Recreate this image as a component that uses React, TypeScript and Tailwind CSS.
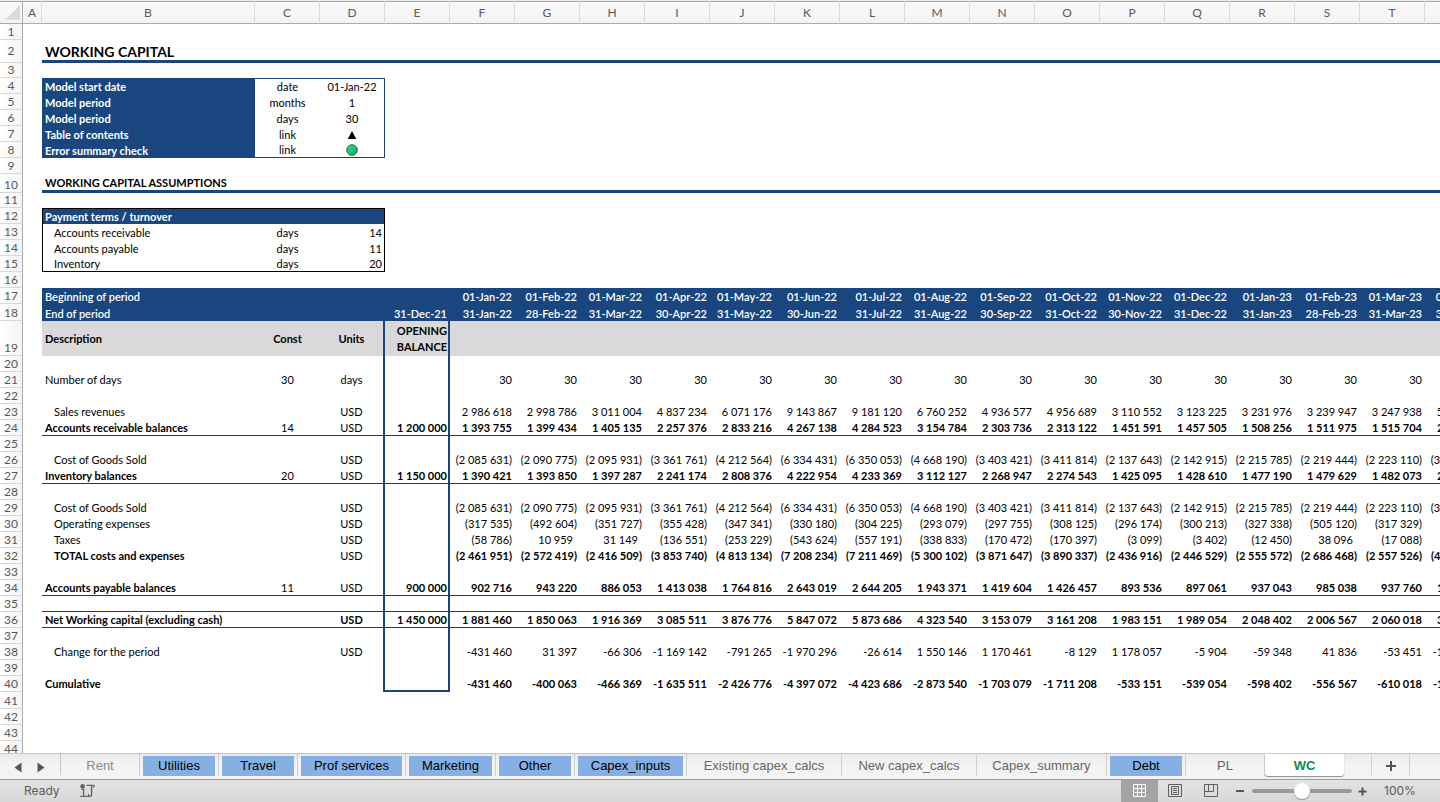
import { useState } from 'react';
import clsx from 'clsx';

interface SheetRow {
  n: number;
  height?: string;
  label?: string;
  constant?: React.ReactNode;
  unit?: React.ReactNode;
  opening?: React.ReactNode;
  values?: string[];
  all?: string; // classes shared by every cell from B on
  b?: string;
  c?: string;
  d?: string;
  e?: string;
  v?: string;
}

const COLUMNS = 'FGHIJKLMNOPQRSTU'.split('');

const list = (text: string) => text.split('|');

const starts = list('01-Jan-22|01-Feb-22|01-Mar-22|01-Apr-22|01-May-22|01-Jun-22|01-Jul-22|01-Aug-22|01-Sep-22|01-Oct-22|01-Nov-22|01-Dec-22|01-Jan-23|01-Feb-23|01-Mar-23|01-Apr-23');
const ends = list('31-Jan-22|28-Feb-22|31-Mar-22|30-Apr-22|31-May-22|30-Jun-22|31-Jul-22|31-Aug-22|30-Sep-22|31-Oct-22|30-Nov-22|31-Dec-22|31-Jan-23|28-Feb-23|31-Mar-23|30-Apr-23');
const sales = list('2 986 618|2 998 786|3 011 004|4 837 234|6 071 176|9 143 867|9 181 120|6 760 252|4 936 577|4 956 689|3 110 552|3 123 225|3 231 976|3 239 947|3 247 938|5 217 905');
const receivable = list('1 393 755|1 399 434|1 405 135|2 257 376|2 833 216|4 267 138|4 284 523|3 154 784|2 303 736|2 313 122|1 451 591|1 457 505|1 508 256|1 511 975|1 515 704|2 435 022');
const cogs = list('(2 085 631)|(2 090 775)|(2 095 931)|(3 361 761)|(4 212 564)|(6 334 431)|(6 350 053)|(4 668 190)|(3 403 421)|(3 411 814)|(2 137 643)|(2 142 915)|(2 215 785)|(2 219 444)|(2 223 110)|(3 565 748)');
const inventory = list('1 390 421|1 393 850|1 397 287|2 241 174|2 808 376|4 222 954|4 233 369|3 112 127|2 268 947|2 274 543|1 425 095|1 428 610|1 477 190|1 479 629|1 482 073|2 377 165');
const opex = list('(317 535)|(492 604)|(351 727)|(355 428)|(347 341)|(330 180)|(304 225)|(293 079)|(297 755)|(308 125)|(296 174)|(300 213)|(327 338)|(505 120)|(317 329)|(365 114)');
const taxes = list('(58 786)|10 959|31 149|(136 551)|(253 229)|(543 624)|(557 191)|(338 833)|(170 472)|(170 397)|(3 099)|(3 402)|(12 450)|38 096|(17 088)|(148 672)');
const totals = list('(2 461 951)|(2 572 419)|(2 416 509)|(3 853 740)|(4 813 134)|(7 208 234)|(7 211 469)|(5 300 102)|(3 871 647)|(3 890 337)|(2 436 916)|(2 446 529)|(2 555 572)|(2 686 468)|(2 557 526)|(4 079 534)');
const payable = list('902 716|943 220|886 053|1 413 038|1 764 816|2 643 019|2 644 205|1 943 371|1 419 604|1 426 457|893 536|897 061|937 043|985 038|937 760|1 495 829');
const netCapital = list('1 881 460|1 850 063|1 916 369|3 085 511|3 876 776|5 847 072|5 873 686|4 323 540|3 153 079|3 161 208|1 983 151|1 989 054|2 048 402|2 006 567|2 060 018|3 316 358');
const change = list('-431 460|31 397|-66 306|-1 169 142|-791 265|-1 970 296|-26 614|1 550 146|1 170 461|-8 129|1 178 057|-5 904|-59 348|41 836|-53 451|-1 256 340');
const cumulative = list('-431 460|-400 063|-466 369|-1 635 511|-2 426 776|-4 397 072|-4 423 686|-2 873 540|-1 703 079|-1 711 208|-533 151|-539 054|-598 402|-556 567|-610 018|-1 866 358');

const NAVY = 'bg-[#19467f] text-white';
const RULE = 'border-b border-b-[#333333]';
const HEAVY_RULE = 'border-b-3 border-b-[#19467f]';
const BOX_D = 'border-r border-r-[#19467f]';

const rows: SheetRow[] = [
  { n: 1 },
  { n: 2, height: 'h-[23px]', label: 'WORKING CAPITAL', all: HEAVY_RULE, b: 'text-[14px] leading-[17px] font-bold' },
  { n: 3, height: 'h-[15px]' },
  { n: 4, label: 'Model start date', constant: 'date', unit: '01-Jan-22', b: clsx(NAVY, 'font-bold'), c: 'border-t border-t-[#19467f]', d: clsx(BOX_D, 'border-t border-t-[#19467f]') },
  { n: 5, label: 'Model period', constant: 'months', unit: '1', b: clsx(NAVY, 'font-bold'), d: BOX_D },
  { n: 6, label: 'Model period', constant: 'days', unit: '30', b: clsx(NAVY, 'font-bold'), d: BOX_D },
  { n: 7, label: 'Table of contents', constant: 'link', unit: <ContentsLink />, b: clsx(NAVY, 'font-bold'), d: BOX_D },
  { n: 8, label: 'Error summary check', constant: 'link', unit: <CheckLink />, b: clsx(NAVY, 'font-bold'), c: 'border-b border-b-[#19467f]', d: clsx(BOX_D, 'border-b border-b-[#19467f]') },
  { n: 9 },
  { n: 10, height: 'h-[19px]', label: 'WORKING CAPITAL ASSUMPTIONS', all: HEAVY_RULE, b: 'font-bold' },
  { n: 11, height: 'h-[15px]' },
  { n: 12, label: 'Payment terms / turnover', b: clsx(NAVY, 'border-l border-t border-black font-bold'), c: clsx(NAVY, 'border-t border-black'), d: clsx(NAVY, 'border-r border-t border-black') },
  { n: 13, label: 'Accounts receivable', constant: 'days', unit: '14', b: 'border-l border-black pl-[11px]', d: 'border-r border-black pr-[2px] text-right' },
  { n: 14, label: 'Accounts payable', constant: 'days', unit: '11', b: 'border-l border-black pl-[11px]', d: 'border-r border-black pr-[2px] text-right' },
  { n: 15, label: 'Inventory', constant: 'days', unit: '20', b: 'border-b border-l border-black pl-[11px]', c: 'border-b border-black', d: 'border-b border-r border-black pr-[2px] text-right' },
  { n: 16 },
  { n: 17, label: 'Beginning of period', values: starts, all: clsx(NAVY, 'font-semibold') },
  { n: 18, height: 'h-[17px]', label: 'End of period', opening: '31-Dec-21', values: ends, all: clsx(NAVY, 'font-semibold'), e: 'pr-[3px]' },
  { n: 19, height: 'h-[35px]', label: 'Description', constant: 'Const', unit: 'Units', opening: <>OPENING<br />BALANCE</>, all: 'bg-[#d9d9d9] font-bold leading-[16px]' },
  { n: 20 },
  { n: 21, label: 'Number of days', constant: '30', unit: 'days', values: COLUMNS.map(() => '30') },
  { n: 22 },
  { n: 23, label: 'Sales revenues', unit: 'USD', values: sales, b: 'pl-[12px]' },
  { n: 24, label: 'Accounts receivable balances', constant: '14', unit: 'USD', opening: '1 200 000', values: receivable, all: RULE, b: 'font-bold', e: 'font-bold', v: 'font-bold' },
  { n: 25 },
  { n: 26, label: 'Cost of Goods Sold', unit: 'USD', values: cogs, b: 'pl-[12px]' },
  { n: 27, label: 'Inventory balances', constant: '20', unit: 'USD', opening: '1 150 000', values: inventory, all: RULE, b: 'font-bold', e: 'font-bold', v: 'font-bold' },
  { n: 28 },
  { n: 29, label: 'Cost of Goods Sold', unit: 'USD', values: cogs, b: 'pl-[12px]' },
  { n: 30, label: 'Operating expenses', unit: 'USD', values: opex, b: 'pl-[12px]' },
  { n: 31, label: 'Taxes', unit: 'USD', values: taxes, b: 'pl-[12px]' },
  { n: 32, label: 'TOTAL costs and expenses', unit: 'USD', values: totals, b: 'pl-[12px] font-bold', v: 'font-bold' },
  { n: 33 },
  { n: 34, label: 'Accounts payable balances', constant: '11', unit: 'USD', opening: '900 000', values: payable, all: RULE, b: 'font-bold', e: 'font-bold', v: 'font-bold' },
  { n: 35, all: RULE },
  { n: 36, label: 'Net Working capital (excluding cash)', unit: 'USD', opening: '1 450 000', values: netCapital, all: clsx(RULE, 'font-bold') },
  { n: 37 },
  { n: 38, label: 'Change for the period', unit: 'USD', values: change, b: 'pl-[12px]' },
  { n: 39 },
  { n: 40, label: 'Cumulative', values: cumulative, all: 'font-bold', e: 'border-b-2 border-b-[#19467f]' },
  { n: 41, height: 'h-[17px]' },
  { n: 42 },
  { n: 43 },
  { n: 44 },
];

const tabs = [
  { name: 'Rent', width: 'w-[79px]', faded: true },
  { name: 'Utilities', width: 'w-[79px]', blue: true },
  { name: 'Travel', width: 'w-[79px]', blue: true },
  { name: 'Prof services', width: 'w-[108px]', blue: true },
  { name: 'Marketing', width: 'w-[90px]', blue: true },
  { name: 'Other', width: 'w-[79px]', blue: true },
  { name: 'Capex_inputs', width: 'w-[112px]', blue: true },
  { name: 'Existing capex_calcs', width: 'w-[155px]' },
  { name: 'New capex_calcs', width: 'w-[135px]' },
  { name: 'Capex_summary', width: 'w-[130px]' },
  { name: 'Debt', width: 'w-[79px]', blue: true },
  { name: 'PL', width: 'w-[79px]' },
  { name: 'WC', width: 'w-[79px]' },
];

function ContentsLink() {
  return (
    <a href="#contents" aria-label="Table of contents" className="flex h-[15px] items-center justify-center">
      <svg width="10" height="10" viewBox="0 0 10 10">
        <path d="M5 1 L9.3 9 H0.7 Z" fill="#000" />
      </svg>
    </a>
  );
}

function CheckLink() {
  return (
    <a href="#errors" aria-label="Error summary check" className="flex h-[15px] items-center justify-center">
      <svg width="12" height="12" viewBox="0 0 12 12">
        <defs>
          <linearGradient id="ok" x1="0" y1="0" x2="1" y2="1">
            <stop offset="0" stopColor="#3ddc8c" />
            <stop offset="1" stopColor="#0bab5c" />
          </linearGradient>
        </defs>
        <circle cx="6" cy="6" r="5.3" fill="url(#ok)" stroke="#1d6b43" strokeWidth="1" />
      </svg>
    </a>
  );
}

function Row({ row }: { row: SheetRow }) {
  const boxed = row.n >= 19 && row.n <= 40;
  const valign = row.n === 19 ? 'align-middle' : row.n > 19 ? 'align-top' : 'align-bottom';
  return (
    <tr className={row.height ?? 'h-[16px]'}>
      <th
        scope="row"
        className={clsx(
          'border-r border-b border-r-[#ababab] border-b-[#d8d8d8] bg-linear-to-r from-white to-[#f4f4f4] p-0 text-center text-[12px] leading-[14px] font-normal text-[#595959]',
          row.n === 2 ? 'align-middle' : 'align-bottom',
        )}
      >
        {row.n}
      </th>
      <td className="p-0" />
      <td className={clsx('p-0', valign, !row.b?.includes('pl-') && (row.n === 12 ? 'pl-[2px]' : 'pl-[3px]'), row.all, row.b)}>{row.label}</td>
      <td className={clsx('p-0 text-center', valign, row.all, row.c)}>{row.constant}</td>
      <td
        className={clsx(
          'p-0',
          valign,
          !row.d?.includes('text-right') && 'text-center',
          row.all,
          row.d,
          boxed && 'border-r-2 border-r-[#19467f]',
        )}
      >
        {row.unit}
      </td>
      <td className={clsx('p-0 text-right', valign, row.all, row.e, boxed && 'border-r-2 border-r-[#19467f] pr-px')}>
        {row.opening}
      </td>
      {COLUMNS.map((col, i) => {
        const value = row.values?.[i];
        // positive amounts leave room for the closing bracket of the format
        const bracketed = row.n === 31 && !value?.startsWith('(');
        return (
          <td key={col} className={clsx('p-0 text-right', valign, bracketed ? 'pr-[7px]' : 'pr-[3px]', row.all, row.v)}>
            {value}
          </td>
        );
      })}
    </tr>
  );
}

function ColumnHeader({ name }: { name: string }) {
  return (
    <th scope="col" className="border-r border-b border-r-[#dcdcdc] border-b-[#ababab] p-0 text-center align-middle text-[12px] font-normal text-[#595959]">
      {name}
    </th>
  );
}

function Sheet() {
  return (
    <div className="min-h-0 flex-1 overflow-hidden border-t border-[#ececec]">
      <table className="w-[1490px] table-fixed border-separate border-spacing-0 font-['Lato','Noto_Sans',sans-serif] text-[11px] leading-[15px] whitespace-nowrap text-black">
        <colgroup>
          <col className="w-[23px]" />
          <col className="w-[19px]" />
          <col className="w-[213px]" />
          <col className="w-[65px]" />
          <col className="w-[65px]" />
          <col className="w-[65px]" />
          {COLUMNS.map((col) => (
            <col key={col} className="w-[65px]" />
          ))}
        </colgroup>
        <thead>
          <tr className="h-[23px] bg-linear-to-b from-[#fbfbfb] to-[#f3f3f3] shadow-[inset_0_1px_0_#a8a8a8]">
            <th className="border-r border-b border-[#ababab] p-0 align-middle">
              <svg width="15" height="15" viewBox="0 0 15 15" className="ml-[5px] block" aria-label="Select all">
                <path d="M15 0 V15 H0 Z" fill="#dadada" />
              </svg>
            </th>
            {['A', 'B', 'C', 'D', 'E', ...COLUMNS].map((name) => (
              <ColumnHeader key={name} name={name} />
            ))}
          </tr>
        </thead>
        <tbody>
          {rows.map((row) => (
            <Row key={row.n} row={row} />
          ))}
        </tbody>
      </table>
    </div>
  );
}

function TabBar() {
  const [active, setActive] = useState('WC');
  return (
    <nav className="flex h-[26px] shrink-0 items-start overflow-hidden border-t border-[#c8c8c8] bg-linear-to-b from-[#e9e9e9] to-[#f3f3f3] to-40% font-['Liberation_Sans',Arial,sans-serif] text-[13px] text-[#666666]">
      <div className="flex h-[21px] w-[61px] shrink-0 items-center gap-[15px] border-r border-[#c8c8c8] pt-[5px] pl-[14px]">
        <button aria-label="Previous sheets">
          <svg width="8" height="11" viewBox="0 0 8 11" className="block">
            <path d="M7.5 0.5 V10.5 L0.5 5.5 Z" fill="#555" />
          </svg>
        </button>
        <button aria-label="Next sheets">
          <svg width="8" height="11" viewBox="0 0 8 11" className="block">
            <path d="M0.5 0.5 V10.5 L7.5 5.5 Z" fill="#555" />
          </svg>
        </button>
      </div>
      {tabs.map((tab) =>
        tab.name === active ? (
          <button
            key={tab.name}
            className={clsx(tab.width, 'h-[22px] shrink-0 rounded-b-[3px] bg-white pt-[2px] font-bold text-[#0f8a52] shadow-[0_1px_1px_#8f8f8f]')}
          >
            {tab.name}
          </button>
        ) : (
          <button
            key={tab.name}
            onClick={() => setActive(tab.name)}
            className={clsx(tab.width, 'flex h-[22px] shrink-0 items-end border-r border-[#cfcfcf] pt-[2px] pr-[3px] pl-[3px]')}
          >
            <span
              className={clsx(
                'block h-[20px] w-full text-center leading-[20px]',
                tab.blue && 'bg-[#86b0e3] text-black',
                tab.faded && 'text-[#8a8a8a]',
              )}
            >
              {tab.name}
            </span>
          </button>
        ),
      )}
      <div className="h-[21px] w-[28px] shrink-0 border-r border-[#cfcfcf]" />
      <button aria-label="Add sheet" className="flex h-[21px] w-[38px] shrink-0 items-center justify-center border-r border-[#cfcfcf] pt-[3px]">
        <svg width="10" height="10" viewBox="0 0 10 10">
          <path d="M5 0 V10 M0 5 H10" stroke="#555" strokeWidth="2" />
        </svg>
      </button>
    </nav>
  );
}

function StatusBar() {
  const [zoom, setZoom] = useState(50);
  return (
    <footer className="flex h-[23px] shrink-0 items-center border-t border-[#9c9c9c] bg-linear-to-b from-[#e3e3e3] to-[#d8d8d8] pl-[24px] font-['Inter',sans-serif] text-[12px] text-[#5c5c5c]">
      <span className="w-[56px]">Ready</span>
      <button aria-label="Record macro">
        <svg width="15" height="14" viewBox="0 0 15 14" className="block" fill="none" stroke="#636363" strokeWidth="1.4">
          <circle cx="2.6" cy="2.4" r="2.3" fill="#636363" stroke="none" />
          <path d="M6.5 1.4 H13.8 V3.6 M3.6 5.4 V11.5 M0.3 12.4 H9.4 Q11.6 12.4 11.6 10.2 V1.8" />
          <path d="M1.5 5.6 H4.3 M8.6 12.4 V9.8" strokeWidth="1" />
        </svg>
      </button>
      <div className="ml-auto flex h-full items-center">
        <button aria-label="Normal view" className="flex h-full w-[37px] items-center justify-center bg-[#a3a3a3]">
          <svg width="13" height="14" viewBox="0 0 13 14" fill="none" stroke="#fff" strokeWidth="1">
            <path d="M0.5 0.5 H12.5 V12.5 H0.5 Z M4.5 0.5 V12.5 M8.5 0.5 V12.5 M0.5 4.5 H12.5 M0.5 8.5 H12.5" />
          </svg>
        </button>
        <button aria-label="Page layout" className="flex h-full w-[34px] items-center justify-center">
          <svg width="14" height="14" viewBox="0 0 14 14" fill="none" stroke="#5f5f5f">
            <path d="M0.5 0.5 H13.5 V12.5 H0.5 Z M3.5 2.5 H10.5 V10.5 H3.5 Z M5 4.5 H9 M5 6.5 H9 M5 8.5 H9" />
          </svg>
        </button>
        <button aria-label="Page break preview" className="flex h-full w-[38px] items-center justify-center">
          <svg width="14" height="14" viewBox="0 0 14 14" fill="none" stroke="#5f5f5f">
            <path d="M0.5 0.5 H13.5 V12.5 H0.5 Z M4.5 0.5 V7.5 M0.5 7.5 H9.5 V0.5" />
          </svg>
        </button>
        <button aria-label="Zoom out" className="ml-[6px] h-full w-[10px]" onClick={() => setZoom(Math.max(0, zoom - 10))}>
          <svg width="8" height="8" viewBox="0 0 8 8" className="block">
            <path d="M0 4 H8" stroke="#555" strokeWidth="2" />
          </svg>
        </button>
        <input
          type="range"
          aria-label="Zoom"
          value={zoom}
          onChange={(e) => setZoom(Number(e.target.value))}
          className="mx-[6px] h-[4px] w-[100px] appearance-none rounded-full bg-[#9a9a9a] [&::-webkit-slider-thumb]:h-[16px] [&::-webkit-slider-thumb]:w-[16px] [&::-webkit-slider-thumb]:appearance-none [&::-webkit-slider-thumb]:rounded-full [&::-webkit-slider-thumb]:bg-white [&::-webkit-slider-thumb]:shadow-[0_1px_1px_#8f8f8f]"
        />
        <button aria-label="Zoom in" className="h-full w-[10px]" onClick={() => setZoom(Math.min(100, zoom + 10))}>
          <svg width="9" height="9" viewBox="0 0 9 9" className="block">
            <path d="M4.5 0.5 V8.5 M0.5 4.5 H8.5" stroke="#555" strokeWidth="2" />
          </svg>
        </button>
        <span className="w-[72px] pl-[16px]">{zoom * 2}%</span>
      </div>
    </footer>
  );
}

export default function App() {
  return (
    <div className="flex h-screen flex-col overflow-hidden bg-white">
      <Sheet />
      <TabBar />
      <StatusBar />
    </div>
  );
}
